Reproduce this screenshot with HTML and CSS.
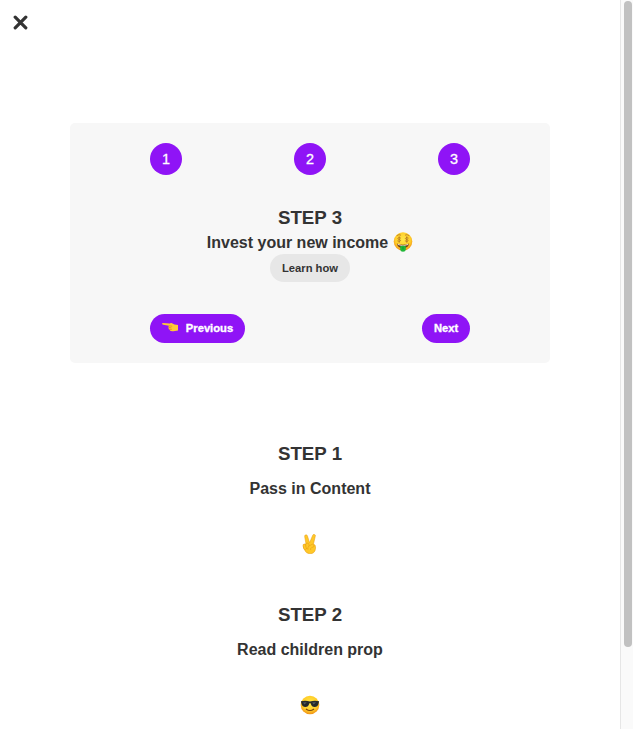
FILE: index.html
```html
<!DOCTYPE html>
<html lang="en">
<head>
<meta charset="utf-8">
<title>Steps</title>
<link rel="stylesheet" href="styles.css">
</head>
<body>
<div class="app">
  <main class="content">
    <button class="close" aria-label="Close">
      <svg width="15" height="15" viewBox="0 0 15 15"><path d="M2.2 2.2L12.800 12.800M12.800 2.200L2.200 12.800"/></svg>
    </button>
    <section class="steps">
      <div class="numbers">
        <div class="number">1</div>
        <div class="number">2</div>
        <div class="number">3</div>
      </div>
      <div class="message">
        <h3>STEP 3</h3>
        <p>Invest your new income
          <svg class="emoji" viewBox="0 0 20 20">
            <defs><radialGradient id="face" cx=".5" cy=".4" r=".62"><stop offset="0" stop-color="#ffe84a"/><stop offset=".65" stop-color="#ffcd29"/><stop offset="1" stop-color="#ee8a13"/></radialGradient></defs>
            <circle cx="10" cy="9.5" r="9.3" fill="url(#face)"/>
            <path d="M4 3.5Q6 1.800 7.700 3M12.300 3Q14 1.800 16 3.500" class="brow"/>
            <path d="M3.800 11.500Q10 14 16.200 11.500Q15 16.300 10 16.300Q5 16.300 3.800 11.500Z" fill="#713c12"/>
            <path d="M4.600 12.100Q10 14.200 15.400 12.100L15 13Q10 14.600 5 13Z" fill="#fff"/>
            <path d="M7.200 14.200Q10 13.200 12.800 14.200V17.500Q12.600 19.800 10 19.800Q7.400 19.800 7.200 17.500Z" fill="#20b83b"/>
            <path d="M10 14.800V17.500" stroke="#087d25" stroke-width=".6"/>
            <path class="dollar" d="M7.600 6Q4.800 4.900 4.800 6.500C4.800 7.700 7.600 7.200 7.600 8.600Q7.500 10 4.700 9M6.200 4.700V10.400M15.200 6Q12.400 4.900 12.400 6.500C12.400 7.700 15.200 7.200 15.200 8.600Q15.100 10 12.300 9M13.800 4.700V10.400"/>
          </svg></p>
        <button class="learn">Learn how</button>
      </div>
      <div class="buttons">
        <button class="action previous">
          <svg class="hand" viewBox="0 0 16 10"><path d="M.7 1Q0 1.200.2 2Q.4 2.700 1.300 2.800L7 3.800Q6 5 6.600 6Q6.400 7.400 7.600 7.700Q8 9 9.300 8.900Q10 9.600 11.400 9.200L16 8.600V3L12.500 2.600L9.500 1Q8.500.6 7.800 1.500Z" fill="#ffc936"/><path d="M6.800 5.400L9.400 5.900M7.200 7.300L9.800 7.400M7 3.800L10.200 4.200" stroke="#de8717" stroke-width=".7" fill="none"/></svg>
          <span>Previous</span>
        </button>
        <button class="action">Next</button>
      </div>
    </section>
    <section class="box">
      <h3>STEP 1</h3>
      <p class="text">Pass in Content</p>
      <svg class="emoji" viewBox="0 0 20 20">
        <g fill="#ffc828" stroke="#e59812" stroke-width=".5" stroke-linejoin="round">
          <path d="M5.300 1Q6.700.2 7.400 1.800L9.600 8.700L12.700 1.300Q13.300-.1 14.500.4Q15.700.8 15.300 2.300L13.500 9.900Q15.900 10.600 15.600 14Q15.200 19.800 9.800 19.800Q5.900 19.600 4.300 15.500Q2.600 12.400 3.800 11.400L6 10L4.700 2.800Q4.500 1.500 5.300 1Z"/>
          <rect x="3.300" y="10" width="2.900" height="5.500" rx="1.400" transform="rotate(-15 4.700 12.500)"/>
          <rect x="5.900" y="9" width="3.200" height="6.100" rx="1.600" transform="rotate(-10 7.600 12)"/>
          <path d="M8 14.800Q7.500 12.800 9 12L12.300 10.200Q14.500 10.300 14 12.600L11.500 13.700Q10.300 14.300 10.600 16"/>
        </g>
      </svg>
    </section>
    <section class="box second">
      <h3>STEP 2</h3>
      <p class="text">Read children prop</p>
      <svg class="emoji" viewBox="0 0 20 20">
        <circle cx="10" cy="10" r="9.300" fill="url(#face)"/>
        <path d="M.9 6.300Q5.500 5 10 6.600Q14.500 5 19.100 6.300L18.700 8Q18 12 14.600 12Q11.600 12 10.700 8.500Q10 7.700 9.300 8.500Q8.400 12 5.400 12Q2 12 1.300 8Z" fill="#25292b"/>
        <path d="M3 7.400L6.800 7.200L4.500 9.500ZM12.200 7.400L16 7.200L13.700 9.500Z" fill="#555c60"/>
        <path d="M6.300 14.200Q10 16.800 13.700 14.200" fill="none" stroke="#79420e" stroke-width="1.100" stroke-linecap="round"/>
      </svg>
    </section>
  </main>
  <div class="scrollbar"><div class="thumb"></div></div>
</div>
</body>
</html>
```
FILE: styles.css
```css
* { box-sizing: border-box; }
body { margin: 0; color: #333; background: #fff; font-family: "Liberation Sans", Arial, sans-serif; overflow: hidden; }
button { border: 0; padding: 0; color: inherit; font-family: inherit; }
h3, p { margin: 0; }
.app { display: flex; height: 729px; }
.content { width: 620px; height: 729px; overflow: hidden; }
.close { display: block; width: 15px; height: 15px; margin: 15px 0 0 13px; background: none; }
.close svg { display: block; }
.close path { stroke: #333; stroke-width: 3.2; stroke-linecap: round; fill: none; }
.steps { width: 480px; height: 240px; margin: 93px auto 0; padding: 20px 80px; background: #f7f7f7; border-radius: 5px; }
.numbers { display: flex; justify-content: space-between; }
.number { width: 32px; height: 32px; border-radius: 50%; background: #8f14f6; color: #fff; font-size: 14.4px; line-height: 32px; text-align: center; -webkit-text-stroke: .3px #fff; }
.message { display: flex; flex-direction: column; align-items: center; padding-top: 31px; }
h3 { font-size: 18.72px; line-height: 24px; }
.message p { display: flex; align-items: center; gap: 5px; font-size: 16px; font-weight: bold; line-height: 25px; height: 24px; }
.emoji { display: block; width: 20px; height: 20px; }
.brow, .dollar { fill: none; stroke: #a8691c; stroke-width: .7; stroke-linecap: round; }
.learn { width: 80px; height: 28px; border-radius: 14px; background: #e7e7e7; font-size: 11.2px; font-weight: bold; line-height: 28px; }
.buttons { display: flex; justify-content: space-between; margin-top: 32px; }
.action { display: flex; align-items: center; justify-content: center; width: 48px; height: 29px; padding-bottom: 1px; border-radius: 15px; background: #8f14f6; color: #fff; font-size: 11.2px; font-weight: bold; line-height: 28px; -webkit-text-stroke: .35px #fff; }
.previous { width: 95px; gap: 8px; }
.hand { width: 16px; height: 10px; margin-bottom: 2px; }
.box { display: flex; flex-direction: column; align-items: center; margin-top: 79px; }
.text { margin-top: 12px; font-size: 16px; font-weight: bold; line-height: 22px; }
.box .emoji { margin-top: 34px; }
.second { margin-top: 49px; }
.scrollbar { width: 13px; padding: 1px 0 0 3px; background: #fafafa; border-left: 1px solid #e6e6e6; }
.thumb { width: 8px; height: 646px; border-radius: 4px; background: #c1c1c1; }
```
